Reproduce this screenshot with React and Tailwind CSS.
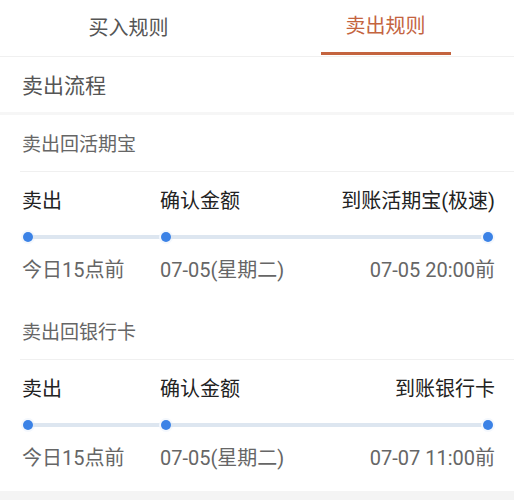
const FONT = "font-['Roboto','Noto_Sans_CJK_SC',sans-serif]";

const sections = [
  {
    title: "卖出回活期宝",
    steps: ["卖出", "确认金额", "到账活期宝(极速)"],
    times: ["今日15点前", "07-05(星期二)", "07-05 20:00前"],
  },
  {
    title: "卖出回银行卡",
    steps: ["卖出", "确认金额", "到账银行卡"],
    times: ["今日15点前", "07-05(星期二)", "07-07 11:00前"],
  },
];

function Dot() {
  return <span className="w-[10px] h-[10px] rounded-full bg-[#3b82e6] ring-2 ring-[#f4f8fd] shrink-0" />;
}

function Flow({title, steps, times}) {
  return (
    <div>
      <div className="h-[56px] flex items-center pt-[4px] pl-[22px] text-[19px] text-[#666]">{title}</div>
      <div className="ml-[20px] border-b border-[#f0f0f0]" />
      <div className="h-[131px] pt-[15px]">
        <div className="flex items-center h-[28px] pl-[22px] pr-[19px] text-[20px] text-[#222]">
          <span className="w-[138px]">{steps[0]}</span>
          <span>{steps[1]}</span>
          <span className="ml-auto">{steps[2]}</span>
        </div>
        <div className="flex items-center h-[12px] mt-[16px] pl-[23px] pr-[21px]">
          <Dot />
          <span className="w-[128px] h-[4px] bg-[#dde6f0]" />
          <Dot />
          <span className="flex-1 h-[4px] bg-[#dde6f0]" />
          <Dot />
        </div>
        <div className="flex items-center h-[26px] mt-[14px] pl-[22px] pr-[19px] text-[20px] text-[#666]">
          <span className="w-[138px]">{times[0]}</span>
          <span>{times[1]}</span>
          <span className="ml-auto">{times[2]}</span>
        </div>
      </div>
    </div>
  );
}

export default function App() {
  return (
    <div className={`w-[514px] h-[500px] bg-white overflow-hidden ${FONT}`}>
      {/* tabs */}
      <div className="flex h-[57px] border-b border-[#f0f0f0]">
        <div className="flex-1 flex justify-center">
          <span className="w-[130px] h-[55px] flex items-center justify-center text-[20px] text-[#555]">买入规则</span>
        </div>
        <div className="flex-1 flex justify-center">
          <span className="w-[130px] h-[55px] flex items-center justify-center text-[20px] text-[#c4643f] border-b-[3px] border-[#c4643f]">
            卖出规则
          </span>
        </div>
      </div>

      <div className="h-[55px] flex items-center pt-[4px] pl-[22px] text-[21px] text-[#555]">卖出流程</div>
      <div className="h-[3px] bg-[#f6f6f6]" />

      {sections.map((s) => (
        <Flow key={s.title} {...s} />
      ))}

      <div className="h-[20px] bg-[#f4f4f4]" />
    </div>
  );
}
